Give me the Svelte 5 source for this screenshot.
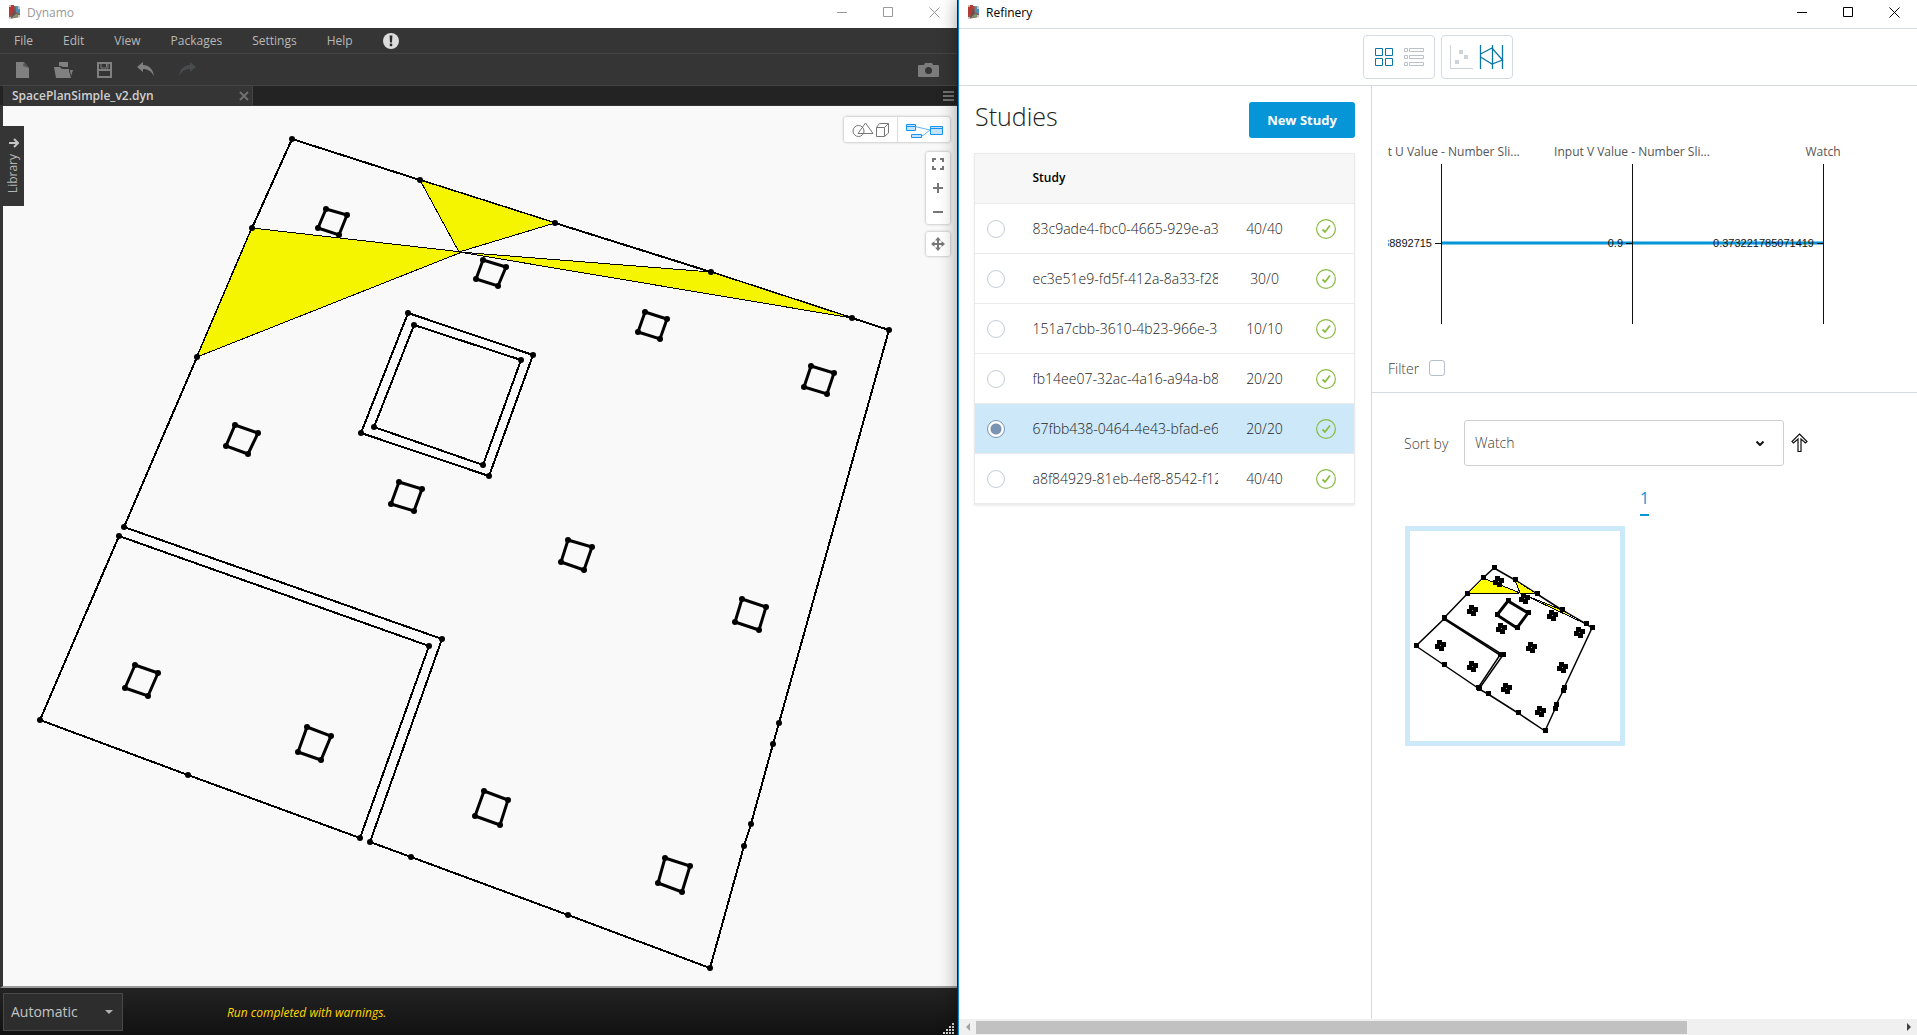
<script>
  const menus = ['File', 'Edit', 'View', 'Packages', 'Settings', 'Help'];

  const studies = [
    { id: '83c9ade4-fbc0-4665-929e-a3', progress: '40/40' },
    { id: 'ec3e51e9-fd5f-412a-8a33-f28', progress: '30/0' },
    { id: '151a7cbb-3610-4b23-966e-3c', progress: '10/10' },
    { id: 'fb14ee07-32ac-4a16-a94a-b8', progress: '20/20' },
    { id: '67fbb438-0464-4e43-bfad-e6', progress: '20/20' },
    { id: 'a8f84929-81eb-4ef8-8542-f12', progress: '40/40' }
  ];
  let selected = $state('67fbb438-0464-4e43-bfad-e6');
  let filter = $state(false);

  const axes = [
    { title: 'Input U Value - Number Sli...', value: '0.38892715', x: 53 },
    { title: 'Input V Value - Number Sli...', value: '0.9', x: 244 },
    { title: 'Watch', value: '0.373221785071419', x: 435 }
  ];

  // Floor plan geometry, in viewport units
  const facade = [
    [124, 527], [197, 357], [252, 228], [292, 139], [420, 180], [555, 223], [711, 272], [852, 318],
    [889, 330], [779, 723], [773, 744], [751, 824], [744, 846], [710, 968], [568, 915], [411, 857],
    [370, 842], [442, 639]
  ];
  const room = [[119, 536], [429, 646], [360, 838], [188, 775], [40, 720]];
  const coreOuter = [[408, 313], [533, 355], [489, 476], [361, 433]];
  const coreInner = [[414, 325], [521, 360], [483, 465], [374, 427]];
  const outlines = [facade, room, coreOuter, coreInner];
  const views = [
    [[420, 180], [555, 223], [459, 252]],
    [[252, 228], [462, 252], [197, 357]],
    [[459, 252], [711, 272], [852, 318]]
  ];
  const columns = [
    [[326, 209], [347, 215], [339, 235], [318, 228]],
    [[483, 260], [506, 267], [498, 286], [476, 279]],
    [[645, 312], [667, 319], [660, 339], [638, 332]],
    [[811, 366], [834, 373], [827, 394], [804, 387]],
    [[235, 425], [258, 433], [248, 454], [226, 446]],
    [[399, 482], [422, 489], [414, 511], [391, 504]],
    [[568, 540], [592, 547], [584, 570], [561, 562]],
    [[742, 599], [766, 607], [759, 630], [735, 622]],
    [[135, 665], [158, 673], [148, 696], [125, 688]],
    [[307, 727], [331, 736], [321, 760], [298, 752]],
    [[484, 791], [508, 800], [500, 825], [475, 816]],
    [[665, 858], [690, 866], [682, 892], [658, 883]]
  ];

  // Thumbnail geometry
  const thumbFacade = [
    [34, 87], [57, 63], [73, 47], [84, 37], [105, 49], [127, 63], [152, 79], [176, 93], [182, 97],
    [154, 157], [153, 160], [146, 174], [145, 178], [135, 200], [108, 182], [78, 163], [69, 158], [93, 124]
  ];
  const thumbRoom = [[34, 88], [90, 124], [68, 157], [34, 134], [6, 115]];
  const thumbCore = [[98, 70], [118, 82], [107, 97], [87, 84]];
  const thumbViews = [
    [[105, 49], [127, 63], [110, 62]],
    [[73, 47], [110, 62], [57, 63]],
    [[110, 62], [152, 79], [176, 93]]
  ];
  const thumbColumns = [
    [88, 50], [114, 67], [142, 84], [169, 101], [62, 79], [91, 97], [121, 116], [152, 136],
    [30, 114], [62, 135], [96, 157], [130, 180]
  ];
  const clover = [[-1, -3], [3, -1], [1, 3], [-3, 1]];
  const pts = (p) => p.map((q) => q.join(',')).join(' ');
</script>

{#snippet appIcon()}
  <svg class="app-icon" width="13" height="16" viewBox="0 0 13 16" aria-hidden="true">
    <path d="M1 1 12 3 12 13 1 15Z" fill="#8a5a58" />
    <path d="M1 1 6 1 5 9 1 13Z" fill="#b8392f" />
    <path d="M8 2 12 3 12 10 8 8Z" fill="#4f8fb4" />
    <path d="M7 9 12 12 4 14Z" fill="#7b9a66" />
    <path d="M6 4 8 10 3 14Z" fill="#6e4f57" />
    <g fill="#dfe3e2"><circle cx="2" cy="2" r="1" /><circle cx="11" cy="4" r="1" /><circle cx="11" cy="12" r="1" /><circle cx="2" cy="14" r="1" /></g>
  </svg>
{/snippet}

{#snippet windowButtons()}
  <div class="win-buttons">
    <button aria-label="Minimize"><svg width="11" height="11" viewBox="0 0 11 11"><path d="M0 5.5H10" /></svg></button>
    <button aria-label="Maximize"><svg width="11" height="11" viewBox="0 0 11 11"><path d="M.5.5H9.5V9.5H.5Z" /></svg></button>
    <button aria-label="Close"><svg width="11" height="11" viewBox="0 0 11 11"><path d="M.5.5 10.5 10.5M10.5.5.5 10.5" /></svg></button>
  </div>
{/snippet}

<div class="desktop">
  <section class="dynamo" aria-label="Dynamo">
    <header class="title-bar inactive">
      {@render appIcon()}
      <span class="title">Dynamo</span>
      {@render windowButtons()}
    </header>

    <nav class="menu-bar">
      {#each menus as m}<button>{m}</button>{/each}
      <button aria-label="Notifications">
        <svg width="16" height="16" viewBox="0 0 16 16"><circle cx="8" cy="8" r="8" fill="#dcdcdc" /><path d="M6.6 2.5H9.4L9 9.4H7Z" fill="#2a2a2a" /><rect x="6.8" y="10.6" width="2.4" height="2.6" fill="#2a2a2a" /></svg>
      </button>
    </nav>

    <div class="tool-bar">
      <button aria-label="New"><svg width="14" height="16" viewBox="0 0 14 16" fill="#808080"><path d="M0 0H8L13 6V16H0Z" /><path d="M8 0 13 6 7 4Z" fill="#555" /></svg></button>
      <button aria-label="Open"><svg width="19" height="16" viewBox="0 0 19 16" fill="#808080"><path d="M5 0H14V5H9L7 4H5Z" /><path d="M0 5H6L8 7H15V9L17 16H2Z" /><path d="M16 8H19L17 14Z" /></svg></button>
      <button aria-label="Save"><svg width="15" height="16" viewBox="0 0 15 16" fill="none" stroke="#808080" stroke-width="2"><path d="M1 1H14V15H1Z" /><path d="M4 1V6H11V1" stroke-width="1" /><path d="M1 8H14" /><path d="M9.5 2V5" stroke-width="1" /></svg></button>
      <button aria-label="Undo"><svg width="18" height="15" viewBox="0 0 18 15" fill="#808080"><path d="M0 5 6 0V3C12 3 16 7 17 14 14 9 11 7 6 7V10Z" /></svg></button>
      <button aria-label="Redo"><svg width="18" height="15" viewBox="0 0 18 15" fill="#484c4c"><path d="M18 5 12 0V3C6 3 2 7 1 14 4 9 7 7 12 7V10Z" /></svg></button>
      <button class="camera" aria-label="Export image"><svg width="21" height="14" viewBox="0 0 21 14"><path d="M1 2H6L7 0H14L15 2H20Q21 2 21 3V13Q21 14 20 14H1Q0 14 0 13V3Q0 2 1 2Z" fill="#7c7c7c" /><circle cx="10.5" cy="7.5" r="3.5" fill="#353535" /></svg></button>
    </div>

    <div class="tab-strip">
      <div class="tab">
        <span>SpacePlanSimple_v2.dyn</span>
        <button aria-label="Close tab"><svg width="10" height="10" viewBox="0 0 10 10"><path d="M1 1 9 9M9 1 1 9" stroke="#707070" stroke-width="2" /></svg></button>
      </div>
      <button class="burger" aria-label="Tabs"><svg width="11" height="10" viewBox="0 0 11 10"><path d="M0 1H11M0 5H11M0 9H11" stroke="#707070" stroke-width="2" /></svg></button>
    </div>

    <div class="canvas">
      <svg class="plan" viewBox="3 106 954 880" preserveAspectRatio="xMinYMin meet" role="img" aria-label="Floor plan">
        {#each outlines as o}<polygon class="wall" points={pts(o)} />{/each}
        {#each views as v}<polygon class="view" points={pts(v)} />{/each}
        {#each columns as c}<polygon class="column" points={pts(c)} />{/each}
        {#each [...outlines, ...columns] as o}
          {#each o as p}<circle cx={p[0]} cy={p[1]} r="3" />{/each}
        {/each}
      </svg>

      <button class="library">
        <svg width="10" height="10" viewBox="0 0 10 10" fill="none" stroke="#c4c4c4" stroke-width="2"><path d="M0 5H9M5 1 9 5 5 9" /></svg>
        <span>Library</span>
      </button>

      <div class="floating">
        <div class="mode">
          <button aria-label="3D preview">
            <svg width="37" height="16" viewBox="0 0 37 16" fill="none" stroke="#777"><circle cx="6.5" cy="9" r="5.5" /><path d="M6 11.5 13.5 1 21 11.5Z" /><path d="M24.5 5.5H32.5V14.5H24.5ZM24.5 5.5 27.5 1.5H36.5V11L32.5 14.5M32.5 5.5 36.5 1.5" /></svg>
          </button>
          <button aria-label="Graph view">
            <svg width="38" height="16" viewBox="0 0 38 16" fill="#c5e4fb" stroke="#1694f3"><path d="M10 4.5 25 8M16 13.5H18L25 8" fill="none" stroke="#64b8f6" /><path d="M1.5 2.5H10.5V8.5H1.5ZM1.5 4.5H10.5M6.5 12.5H16.5V15.5H6.5ZM25.5 4.5H37.5V12.5H25.5ZM25.5 6.5H37.5" /></svg>
          </button>
        </div>
        <div class="zoom">
          <button aria-label="Fit to view"><svg width="12" height="12" viewBox="0 0 12 12"><path d="M1 4V1H4M8 1H11V4M11 8V11H8M4 11H1V8" /></svg></button>
          <button aria-label="Zoom in"><svg width="12" height="12" viewBox="0 0 12 12"><path d="M1 6H11M6 1V11" /></svg></button>
          <button aria-label="Zoom out"><svg width="12" height="12" viewBox="0 0 12 12"><path d="M1 6H11" /></svg></button>
        </div>
        <div class="zoom">
          <button aria-label="Pan"><svg width="14" height="14" viewBox="0 0 14 14"><path d="M7 2V12M2 7H12" /><path d="M7 0 10 3.5H4ZM7 14 10 10.5H4ZM0 7 3.5 4V10ZM14 7 10.5 4V10Z" class="solid" /></svg></button>
        </div>
      </div>
    </div>

    <footer>
      <div class="run">
        <select aria-label="Run mode"><option>Automatic</option></select>
        <svg width="8" height="4" viewBox="0 0 8 4" aria-hidden="true"><path d="M0 0H8L4 4Z" fill="#b0b0b0" /></svg>
      </div>
      <em>Run completed with warnings.</em>
      <svg class="grip" width="12" height="12" viewBox="0 0 12 12" fill="#d8d8d8" aria-hidden="true">
        <path d="M0 10h2v2h-2zM3 10h2v2h-2zM6 10h2v2h-2zM9 10h2v2h-2zM3 7h2v2h-2zM6 7h2v2h-2zM9 7h2v2h-2zM6 4h2v2h-2zM9 4h2v2h-2zM9 1h2v2h-2z" />
      </svg>
    </footer>
  </section>

  <section class="refinery" aria-label="Refinery">
    <header class="title-bar">
      {@render appIcon()}
      <span class="title">Refinery</span>
      {@render windowButtons()}
    </header>

    <div class="switches">
      <div class="switch">
        <button aria-label="Grid"><svg width="18" height="18" viewBox="0 0 18 18" fill="none" stroke="#0b76a5"><path d="M.5.5H7.5V7.5H.5ZM10.5.5H17.5V7.5H10.5ZM.5 10.5H7.5V17.5H.5ZM10.5 10.5H17.5V17.5H10.5Z" /></svg></button>
        <button aria-label="List"><svg width="20" height="18" viewBox="0 0 20 18" fill="none" stroke="#b9c0c8"><path d="M.5.5H3.5V3.5H.5ZM5.5.5H19.5V3.5H5.5ZM.5 7.5H3.5V10.5H.5ZM5.5 7.5H19.5V10.5H5.5ZM.5 14.5H3.5V17.5H.5ZM5.5 14.5H19.5V17.5H5.5Z" /></svg></button>
      </div>
      <div class="switch charts">
        <button aria-label="Scatter plot"><svg width="23" height="24" viewBox="0 0 23 24"><path d="M.5 0V23.5H23" fill="none" stroke="#cdd3d9" /><path d="M9 5h4v4h-4zM14 10h4v4h-4zM5 15h4v4h-4z" fill="#cdd3d9" /></svg></button>
        <button aria-label="Parallel coordinates"><svg width="25" height="24" viewBox="0 0 25 24" fill="none" stroke="#0b76a5" stroke-width="1.3"><path d="M1.5 0V24M13.5 0V24M23.5 0V24" /><path d="M1.500 9 13 3 23.500 15 13 19 1.500 12" /></svg></button>
      </div>
    </div>

    <div class="body">
      <aside>
        <div class="heading">
          <h1>Studies</h1>
          <button class="primary">New Study</button>
        </div>
        <table>
          <thead><tr><th class="pick"></th><th>Study</th><th class="count"></th><th class="state"></th></tr></thead>
          <tbody>
            {#each studies as s, i}
              <tr class:active={selected === s.id}>
                <td class="pick"><input type="radio" name="study" id="study-{i}" value={s.id} bind:group={selected} /></td>
                <td><label for="study-{i}">{s.id}</label></td>
                <td class="count">{s.progress}</td>
                <td class="state"><svg width="20" height="20" viewBox="0 0 20 20" fill="none" stroke="#87bc40" role="img" aria-label="Completed"><circle cx="10" cy="10" r="9.4" stroke-width="1.2" /><path d="M6.5 10.5 9 13 14 6.5" stroke-width="1.8" /></svg></td>
              </tr>
            {/each}
          </tbody>
        </table>
      </aside>

      <main>
        <div class="explore">
          <svg class="chart" height="210" role="img" aria-label="Parallel coordinates chart">
            <path d="M53 125H435" stroke="#7cc6ea" stroke-width="4" />
            <path d="M53 125H435" stroke="#0696d7" stroke-width="2" />
            {#each axes as a}
              <text class="axis-title" x={a.x} y="38" text-anchor="middle">{a.title}</text>
              <text class="axis-value" x={a.x - 9} y="129" text-anchor="end">{a.value}</text>
              <path d="M{a.x} 46V206M{a.x - 6} 125.500H{a.x}" stroke="#111" class="axis" />
            {/each}
          </svg>
          <label class="filter">Filter <input type="checkbox" bind:checked={filter} /></label>
        </div>

        <div class="sort">
          <label for="sort">Sort by</label>
          <div class="select-box">
            <select id="sort"><option>Watch</option></select>
            <svg width="8" height="5" viewBox="0 0 8 5" fill="none" stroke="#111" stroke-width="2" aria-hidden="true"><path d="M.5.5 4 4 7.5.5" /></svg>
          </div>
          <button aria-label="Ascending"><svg width="17" height="20" viewBox="0 0 17 20" fill="#fff" stroke="#111" stroke-width="1.200"><path d="M8.500 1 16 8.500 14.500 10 10 6V18.500H7V6L2.500 10 1 8.500Z" /></svg></button>
        </div>
        <nav class="pager"><a href="#page-1">1</a></nav>
        <button class="card" aria-label="Design option 1">
          <svg width="210" height="210" viewBox="0 0 210 210">
            {#each [thumbFacade, thumbRoom] as o}<polygon class="thin" points={pts(o)} />{/each}
            <polygon class="core" points={pts(thumbCore)} />
            {#each thumbViews as v}<polygon class="view bright" points={pts(v)} />{/each}
            {#each [...thumbFacade, ...thumbRoom, ...thumbCore] as p}<rect x={p[0] - 2} y={p[1] - 3} width="5" height="5" />{/each}
            {#each thumbColumns as c}
              {#each clover as d}<rect x={c[0] + d[0] - 2} y={c[1] + d[1] - 2} width="5" height="5" />{/each}
              <rect x={c[0]} y={c[1]} width="1" height="1" fill="#999" />
            {/each}
          </svg>
        </button>
      </main>
    </div>

    <div class="scroll">
      <button aria-label="Scroll left"><svg width="4" height="8" viewBox="0 0 4 8"><path d="M4 0V8L0 4Z" fill="#a3a3a3" /></svg></button>
      <div class="track"><div class="thumb"></div></div>
      <button aria-label="Scroll right"><svg width="4" height="8" viewBox="0 0 4 8"><path d="M0 0V8L4 4Z" fill="#404040" /></svg></button>
    </div>
  </section>
</div>

<style>
  :global(body) { margin: 0; }
  * { box-sizing: border-box; }
  button { padding: 0; border: 0; background: none; font: inherit; color: inherit; display: flex; align-items: center; justify-content: center; }
  select { appearance: none; font: inherit; color: inherit; margin: 0; }
  svg { display: block; flex: none; }

  .desktop {
    display: grid;
    grid-template-columns: 958fr 959fr;
    min-height: 100vh;
    font-family: "Open Sans", "Noto Sans", sans-serif;
    font-size: 12px;
    overflow: hidden;
  }
  .dynamo, .refinery { display: flex; flex-direction: column; min-width: 0; }
  .dynamo { background: #353535; color: #b8b8b8; border-right: 1px solid #2a2a2a; }
  .refinery { background: #fff; color: #3c3c3c; border-left: 1px solid #1883d0; box-shadow: 0 0 18px rgba(0, 0, 0, 0.4); position: relative; }

  .title-bar { display: flex; align-items: center; height: 28px; padding-left: 8px; background: #fff; color: #000; }
  .title-bar.inactive { color: #999; }
  .title { margin-left: 6px; line-height: 24px; margin-bottom: 2px; }
  .app-icon { margin-bottom: 4px; }
  .win-buttons { display: flex; margin-left: auto; margin-bottom: 3px; }
  .win-buttons button { width: 46px; height: 24px; }
  .win-buttons path { fill: none; stroke: currentColor; }
  .refinery .title-bar { height: 29px; border-bottom: 1px solid #d5dae0; }

  .menu-bar { display: flex; align-items: center; gap: 30px; height: 26px; padding-left: 14px; border-bottom: 1px solid #444; }
  .tool-bar { display: flex; height: 32px; padding-left: 2px; border-bottom: 1px solid #444; }
  .tool-bar button { width: 41px; }
  .tool-bar .camera { margin-left: auto; margin-right: 8px; }
  .tab-strip { display: flex; height: 20px; padding-left: 3px; background: #232323; border-bottom: 1px solid #353535; }
  .tab { display: flex; align-items: center; justify-content: space-between; width: 250px; padding: 0 3px 0 9px; background: #353535; border-right: 1px solid #444; font-weight: 600; color: #d0d0d0; }
  .burger { margin-left: auto; margin-right: 3px; }

  .canvas { position: relative; flex: 1; display: flex; background: #f9f9f9; border-left: 3px solid #353535; border-bottom: 2px solid #9a9a9a; }
  .plan { width: 100%; align-self: flex-start; }
  .wall { fill: none; stroke: #000; stroke-width: 2; shape-rendering: crispEdges; }
  .column { fill: none; stroke: #000; stroke-width: 3; }
  .view { fill: #f5f500; stroke: #000; stroke-width: 1; shape-rendering: crispEdges; }
  .view.bright { fill: #ff0; }

  .library { position: absolute; left: 0; top: 20px; width: 21px; height: 80px; flex-direction: column; gap: 6px; background: #353535; color: #b4b4b4; }
  .library span { writing-mode: vertical-rl; rotate: 180deg; line-height: 20px; margin-right: 2px; }
  .floating { position: absolute; top: 11px; right: 7px; display: flex; flex-direction: column; align-items: flex-end; }
  .mode, .zoom { display: flex; background: #fff; border-radius: 2px; box-shadow: 0 0 3px rgba(0, 0, 0, 0.35); }
  .mode { margin-bottom: 10px; }
  .mode button { width: 53px; height: 25px; }
  .mode button + button { border-left: 1px solid #ddd; }
  .zoom { flex-direction: column; width: 24px; margin-bottom: 8px; }
  .zoom button { height: 24px; }
  .zoom path { fill: none; stroke: #777; stroke-width: 2; }
  .zoom .solid { fill: #777; stroke: none; }

  footer { display: flex; align-items: center; height: 47px; padding: 0 2px 0 3px; background: linear-gradient(#232323, #111); }
  .run { position: relative; display: flex; align-items: center; }
  .run select { width: 120px; height: 38px; padding: 0 7px; background: #2d2d2d; border: 1px solid #484848; border-radius: 0; font-size: 14px; color: #c4c4c4; }
  .run svg { position: absolute; right: 10px; pointer-events: none; }
  footer em { margin-left: 104px; color: #ffd800; padding-top: 2px; }
  .grip { margin-left: auto; align-self: flex-end; margin-bottom: 1px; }

  .switches { display: flex; align-items: center; justify-content: center; gap: 6px; height: 57px; border-bottom: 1px solid #d5dae0; }
  .switch { display: flex; align-items: center; justify-content: center; gap: 11px; width: 72px; height: 44px; border: 1px solid #d5dae0; border-radius: 4px; }
  .charts { gap: 6px; }

  .body { flex: 1; display: grid; grid-template-columns: 413px minmax(0, 1fr); }
  aside { padding: 16px 16px 16px 15px; border-right: 1px solid #d5dae0; }
  .heading { display: flex; align-items: flex-start; justify-content: space-between; margin-bottom: 15px; }
  h1 { margin: 0 1px; font-size: 25px; line-height: 28px; font-weight: 300; color: #222; }
  .primary { width: 106px; height: 36px; border-radius: 3px; background: #0696d7; color: #fff; font-size: 13px; font-weight: 700; }
  table { width: 100%; table-layout: fixed; border-collapse: collapse; border: 1px solid #eaeaea; box-shadow: 0 2px 2px rgba(0, 0, 0, 0.08); font-size: 14px; font-weight: 300; color: #222; }
  tr { height: 50px; border-bottom: 1px solid #eaeaea; }
  thead { background: #f7f7f7; }
  th { padding: 0 0 2px; text-align: left; font-size: 12px; font-weight: 600; color: #000; }
  td { padding: 0; }
  td label { display: block; overflow: hidden; white-space: nowrap; line-height: 20px; }
  .active { background: #cce8f9; }
  .pick { width: 58px; padding-left: 12px; }
  .count { width: 94px; text-align: center; }
  .state { width: 43px; padding-left: 4px; }
  input[type='radio'] { display: block; appearance: none; width: 18px; height: 18px; margin: 0; border: 1px solid #c3ccd6; border-radius: 50%; background: #fff; }
  input[type='radio']:checked { border-color: #7b93b3; background: radial-gradient(#7b93b3 0 5px, #fff 6px); }

  .explore { padding: 32px 16px 14px; border-bottom: 1px solid #d5dae0; }
  .chart { width: 100%; overflow: hidden; }
  .axis { shape-rendering: crispEdges; }
  .axis-title { font-size: 12px; fill: #555; }
  .axis-value { font: 11px "Liberation Sans", sans-serif; fill: #111; }
  .filter { display: inline-flex; align-items: center; gap: 10px; margin-top: 30px; height: 20px; font-size: 14px; font-weight: 300; }
  input[type='checkbox'] { appearance: none; width: 16px; height: 16px; margin: 0; border: 1px solid #b4bfcc; border-radius: 3px; background: #fff; }
  .sort { display: flex; align-items: center; padding: 27px 0 0 32px; font-size: 14px; font-weight: 300; }
  .sort > label { width: 60px; }
  .select-box { position: relative; display: flex; align-items: center; width: 320px; margin-right: 7px; }
  .select-box select { width: 100%; height: 46px; padding: 0 10px 2px; border: 1px solid #d0d0d0; border-radius: 3px; background: #fff; font-weight: 300; }
  .select-box svg { position: absolute; right: 20px; pointer-events: none; }
  .pager { display: flex; justify-content: center; padding: 20px 0 10px; }
  .pager a { color: #0696d7; font-size: 16px; line-height: 24px; text-decoration: none; padding-bottom: 4px; border-bottom: 2px solid #0696d7; }
  .card { margin-left: 33px; border: 5px solid #cbe9f8; background: #fff; }
  .thin { fill: none; stroke: #000; stroke-width: 1.5; }
  .core { fill: none; stroke: #000; stroke-width: 3; }

  .scroll { display: flex; height: 16px; background: #f0f0f0; }
  .scroll button { width: 17px; }
  .track { flex: 1; display: flex; align-items: center; }
  .thumb { width: 77%; height: 13px; background: #c1c1c1; }
</style>
